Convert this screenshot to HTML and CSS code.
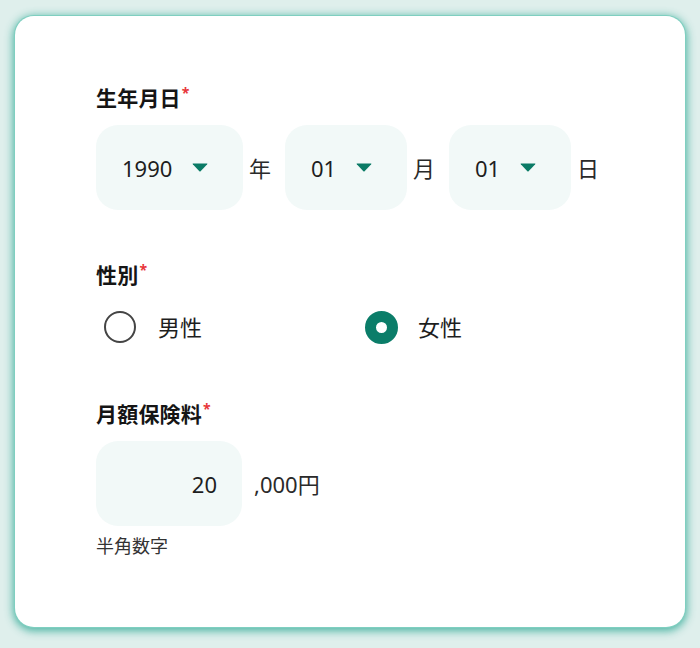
FILE: index.html
```html
<!DOCTYPE html>
<html lang="ja">
<head>
<meta charset="utf-8">
<link rel="stylesheet" href="styles.css">
</head>
<body>
<div class="card">
  <div class="field field-birth">
    <div class="label">生年月日<span class="req">*</span></div>
    <div class="date-row">
      <div class="select sel-year"><span class="val">1990</span><svg class="caret" viewBox="0 0 16 9" width="16" height="9"><path d="M1 0.5 H15 Q15.8 0.5 15.2 1.3 L8.6 8.3 Q8 8.9 7.4 8.3 L0.8 1.3 Q0.2 0.5 1 0.5 Z"/></svg></div>
      <span class="unit">年</span>
      <div class="select sel-md"><span class="val">01</span><svg class="caret" viewBox="0 0 16 9" width="16" height="9"><path d="M1 0.5 H15 Q15.8 0.5 15.2 1.3 L8.6 8.3 Q8 8.9 7.4 8.3 L0.8 1.3 Q0.2 0.5 1 0.5 Z"/></svg></div>
      <span class="unit">月</span>
      <div class="select sel-md"><span class="val">01</span><svg class="caret" viewBox="0 0 16 9" width="16" height="9"><path d="M1 0.5 H15 Q15.8 0.5 15.2 1.3 L8.6 8.3 Q8 8.9 7.4 8.3 L0.8 1.3 Q0.2 0.5 1 0.5 Z"/></svg></div>
      <span class="unit">日</span>
    </div>
  </div>

  <div class="field field-gender">
    <div class="label">性別<span class="req">*</span></div>
    <div class="radio-row">
      <div class="radio"><span class="dot"></span><span class="rtext">男性</span></div>
      <div class="radio checked"><span class="dot"></span><span class="rtext">女性</span></div>
    </div>
  </div>

  <div class="field field-fee">
    <div class="label">月額保険料<span class="req">*</span></div>
    <div class="fee-row">
      <div class="input"><span class="val">20</span></div>
      <span class="suffix">,000円</span>
    </div>
    <div class="hint">半角数字</div>
  </div>
</div>
</body>
</html>
```

FILE: styles.css
```css
html, body {
  margin: 0;
  padding: 0;
  background: #dfefec;
  font-family: "Noto Sans", "Noto Sans CJK JP", sans-serif;
  color: #1e1e1e;
}

body {
  padding: 16px 15px 21px 15px;
}

.card {
  width: 670px;
  height: 611px;
  box-sizing: border-box;
  background: #fff;
  border-radius: 19px;
  box-shadow: 0 0 0 1px #7fcfc0, 0 2px 9px 2px rgba(52, 170, 150, 0.85);
  padding: 67px 81px 0 81px;
}

.label {
  font-size: 21px;
  font-weight: 700;
  line-height: 31px;
  color: #151515;
  letter-spacing: 0.2px;
}

.req {
  color: #e8363a;
  font-size: 14px;
  font-weight: 700;
  vertical-align: top;
  line-height: 20px;
  margin-left: 1px;
}

.date-row {
  display: flex;
  align-items: center;
  margin-top: 11px;
}

.select {
  flex: none;
  height: 85px;
  box-sizing: border-box;
  background: #f2f9f8;
  border-radius: 22px;
  display: flex;
  align-items: center;
  padding-left: 26px;
  padding-right: 35px;
  justify-content: space-between;
}

.sel-year { width: 147px; }
.sel-md { width: 122px; }

.val {
  font-size: 22px;
  line-height: 30px;
  color: #1e1e1e;
}

.caret {
  fill: #0b7b66;
  flex: none;
}

.unit {
  flex: none;
  font-size: 22px;
  line-height: 30px;
  color: #2a2a2a;
  margin-left: 6px;
  margin-right: 14px;
}

.field-gender {
  margin-top: 50px;
}

.radio-row {
  display: flex;
  margin-top: 15px;
  height: 42px;
  align-items: center;
}

.radio {
  flex: none;
  display: flex;
  align-items: center;
  width: 261px;
  padding-left: 8px;
}

.radio + .radio {
  padding-left: 0;
  width: auto;
}

.dot {
  width: 32px;
  height: 32px;
  box-sizing: border-box;
  border: 2.5px solid #444;
  border-radius: 50%;
  flex: none;
}

.checked .dot {
  width: 33px;
  height: 33px;
  border: 11px solid #0b7d69;
  background: #fff;
}

.rtext {
  font-size: 22px;
  line-height: 30px;
  color: #1e1e1e;
  margin-left: 22px;
}

.checked .rtext {
  margin-left: 20px;
}

.field-fee {
  margin-top: 51px;
}

.fee-row {
  display: flex;
  align-items: center;
  margin-top: 11px;
}

.input {
  flex: none;
  width: 146px;
  height: 85px;
  box-sizing: border-box;
  background: #f2f9f8;
  border-radius: 22px;
  display: flex;
  align-items: center;
  justify-content: flex-end;
  padding-right: 25px;
}

.suffix {
  font-size: 22px;
  line-height: 30px;
  color: #2a2a2a;
  margin-left: 12px;
}

.hint {
  font-size: 18px;
  line-height: 26px;
  color: #333;
  margin-top: 7px;
}
```
